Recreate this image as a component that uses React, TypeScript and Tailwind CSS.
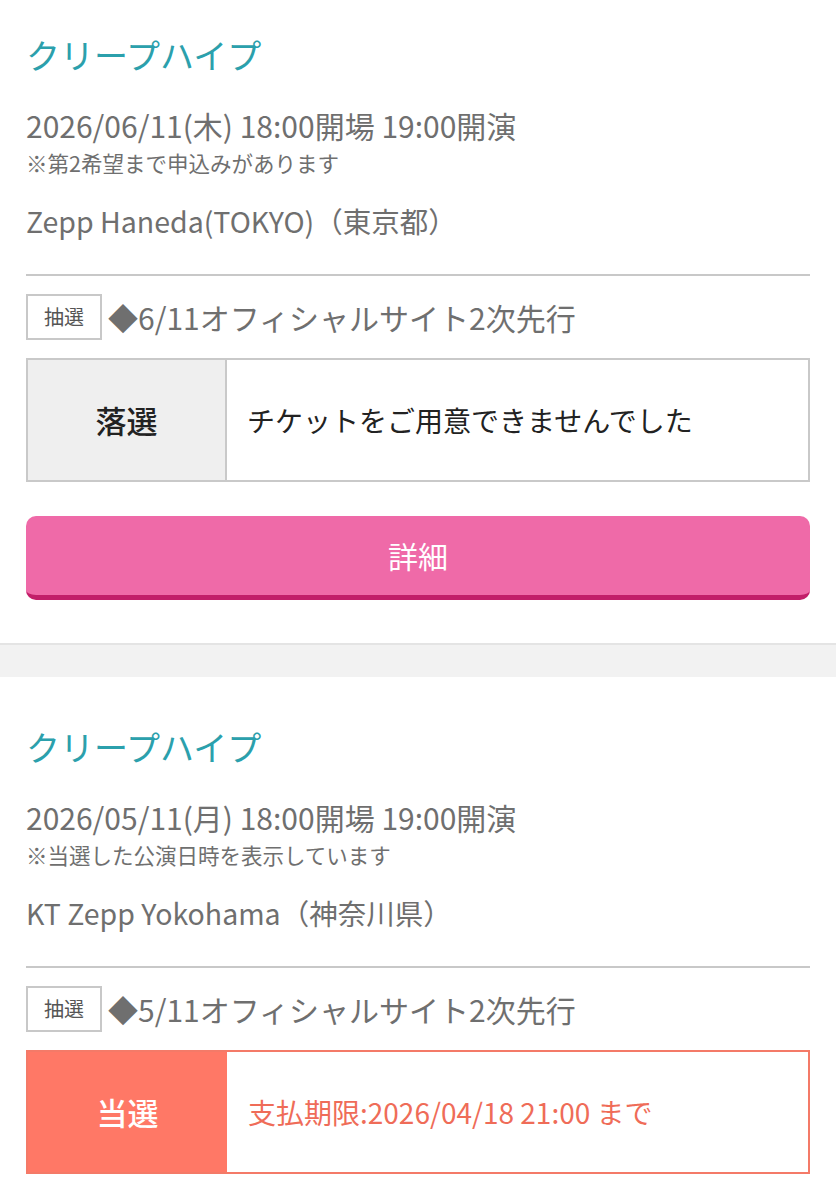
import React from 'react';

type Ticket = {
  artist: string;
  date: string;
  note: string;
  venue: string;
  sale: string;
  result: 'won' | 'lost';
  message: string;
};

const tickets: Ticket[] = [
  {
    artist: 'クリープハイプ',
    date: '2026/06/11(木) 18:00開場 19:00開演',
    note: '※第2希望まで申込みがあります',
    venue: 'Zepp Haneda(TOKYO)（東京都）',
    sale: '◆6/11オフィシャルサイト2次先行',
    result: 'lost',
    message: 'チケットをご用意できませんでした',
  },
  {
    artist: 'クリープハイプ',
    date: '2026/05/11(月) 18:00開場 19:00開演',
    note: '※当選した公演日時を表示しています',
    venue: 'KT Zepp Yokohama（神奈川県）',
    sale: '◆5/11オフィシャルサイト2次先行',
    result: 'won',
    message: '支払期限:2026/04/18 21:00 まで',
  },
];

function ResultBox({ ticket }: { ticket: Ticket }) {
  if (ticket.result === 'won') {
    return (
      <div className="mt-[18px] flex h-[124px] border-2 border-[#f47a68]">
        <div className="flex w-[199px] shrink-0 items-center justify-center bg-[#ff7866] text-[31px] font-medium text-white">
          当選
        </div>
        <div className="flex items-center pl-[21px] text-[28px] text-[#ef6c58]">
          {ticket.message}
        </div>
      </div>
    );
  }
  return (
    <div className="mt-[18px] flex h-[124px] border-2 border-[#c9c9c9]">
      <div className="flex w-[199px] shrink-0 items-center justify-center border-r-2 border-[#c9c9c9] bg-[#efefef] text-[31px] font-medium text-[#222]">
        落選
      </div>
      <div className="flex items-center pl-[20px] text-[28px] text-[#222]">
        {ticket.message}
      </div>
    </div>
  );
}

function TicketCard({ ticket, top }: { ticket: Ticket; top: string }) {
  return (
    <section className={`bg-white px-[26px] ${top}`}>
      <h2 className="text-[34px] leading-[44px] text-[#2ba0ac]">
        {ticket.artist}
      </h2>
      <p className="mt-[28px] text-[30px] leading-[40px] text-[#6f6f6f]">
        {ticket.date}
      </p>
      <p className="mt-[4px] text-[21.5px] leading-[28px] text-[#6f6f6f]">
        {ticket.note}
      </p>
      <p className="mt-[24px] text-[28.5px] leading-[40px] text-[#6f6f6f]">
        {ticket.venue}
      </p>
      <div className="mt-[33px] h-[2px] bg-[#c8c8c8]" />
      <div className="mt-[18px] flex items-center gap-[6px]">
        <span className="flex h-[46px] w-[76px] items-center justify-center border-2 border-[#c8c8c8] text-[20px] text-[#555]">
          抽選
        </span>
        <span className="text-[30px] leading-[40px] text-[#6f6f6f]">
          {ticket.sale}
        </span>
      </div>
      <ResultBox ticket={ticket} />
    </section>
  );
}

export default function App() {
  const [first, second] = tickets;
  return (
    <div className="min-h-[1200px] bg-white font-['Noto_Sans_CJK_JP',sans-serif]">
      <TicketCard ticket={first} top="pt-[33px]" />
      <div className="bg-white px-[26px] pt-[34px] pb-[43px]">
        <button className="flex h-[84px] w-full items-center justify-center rounded-[10px] border-b-[5px] border-[#c21e69] bg-[#ef6aa8] text-[30px] text-white">
          詳細
        </button>
      </div>
      <div className="h-[34px] border-t-2 border-[#e4e4e4] bg-[#f2f2f2]" />
      <TicketCard ticket={second} top="pt-[48px]" />
    </div>
  );
}
